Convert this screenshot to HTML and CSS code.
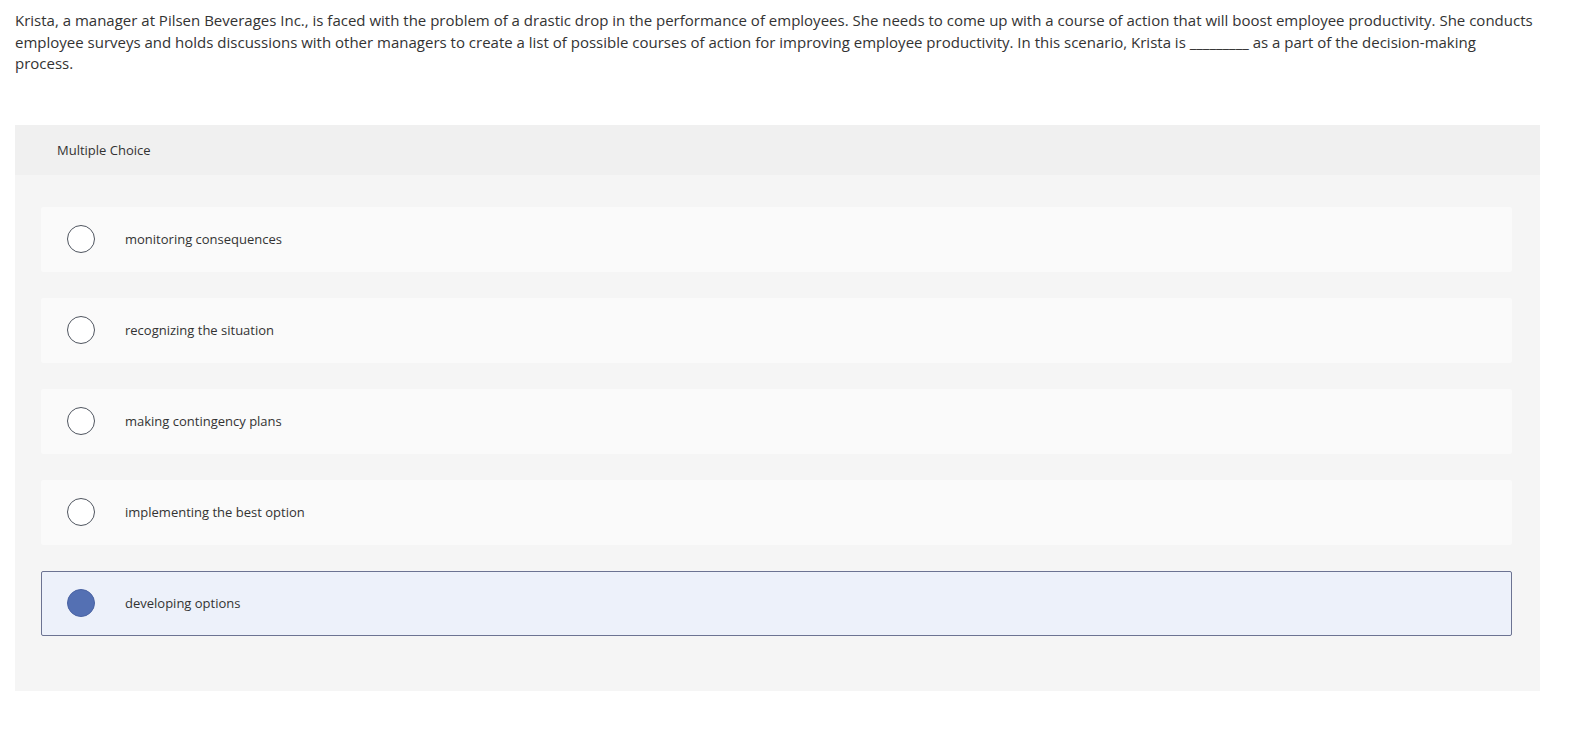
FILE: index.html
```html
<!DOCTYPE html>
<html lang="en">
<head>
<meta charset="utf-8">
<title>Multiple Choice</title>
<link rel="stylesheet" href="styles.css">
</head>
<body>
<div class="page">
  <p class="prompt">Krista, a manager at Pilsen Beverages Inc., is faced with the problem of a drastic drop in the performance of employees. She needs to come up with a course of action that will boost employee productivity. She conducts employee surveys and holds discussions with other managers to create a list of possible courses of action for improving employee productivity. In this scenario, Krista is <span class="blank">_________</span> as a part of the decision-making process.</p>

  <section class="panel">
    <header class="panel-head">Multiple Choice</header>
    <div class="choices">
      <div class="choice"><span class="radio"></span><span class="label">monitoring consequences</span></div>
      <div class="choice"><span class="radio"></span><span class="label">recognizing the situation</span></div>
      <div class="choice"><span class="radio"></span><span class="label">making contingency plans</span></div>
      <div class="choice"><span class="radio"></span><span class="label">implementing the best option</span></div>
      <div class="choice selected"><span class="radio"></span><span class="label">developing options</span></div>
    </div>
  </section>
</div>
</body>
</html>
```

FILE: styles.css
```css
html, body {
  margin: 0;
  padding: 0;
  background: #ffffff;
}

body {
  font-family: "Open Sans", "Liberation Sans", sans-serif;
  color: #333;
}

.page {
  width: 1525px;
  padding: 10px 0 0 15px;
}

.prompt {
  margin: 0;
  max-width: 1520px;
  font-size: 15px;
  line-height: 21.5px;
  color: #333;
}

.blank {
  color: #333;
}

.panel {
  margin-top: 50px;
  background: #f5f5f5;
  padding-bottom: 55px;
}

.panel-head {
  height: 50px;
  background: #f0f0f0;
  display: flex;
  align-items: center;
  padding-left: 42px;
  font-size: 13px;
  color: #333;
}

.choices {
  display: flex;
  flex-direction: column;
  gap: 26px;
  padding: 32px 28px 0 26px;
}

.choice {
  height: 65px;
  box-sizing: border-box;
  background: #fafafa;
  display: flex;
  align-items: center;
  padding-left: 25px;
  border: 1px solid transparent;
  border-radius: 2px;
}

.choice.selected {
  background: #edf1fa;
  border-color: #6c7392;
}

.radio {
  width: 28px;
  height: 28px;
  box-sizing: border-box;
  border-radius: 50%;
  border: 1.5px solid #4f555f;
  background: #fff;
  flex: none;
}

.choice.selected .radio {
  background: #5470b3;
  border-color: #4a63a3;
}

.label {
  margin-left: 30px;
  font-size: 13px;
  color: #333;
}
```
